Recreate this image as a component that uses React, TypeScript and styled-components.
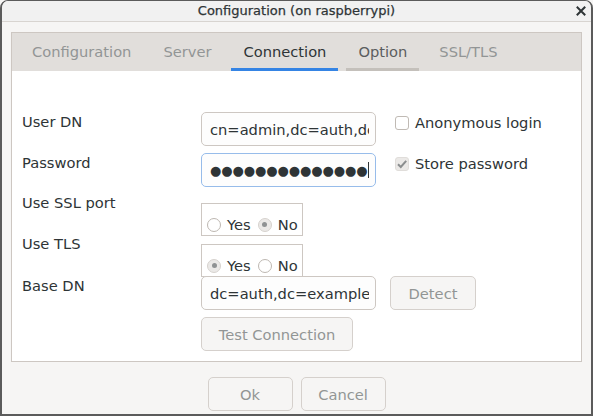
import React from 'react';
import styled, { createGlobalStyle } from 'styled-components';

const Global = createGlobalStyle`
  html, body { margin: 0; padding: 0; background: #f6f5f4; }
  body {
    font-family: "DejaVu Sans", "Liberation Sans", sans-serif;
    font-size: 14.67px;
    color: #2e3436;
  }
  * { box-sizing: border-box; }
`;

const Window = styled.div`
  width: 593px;
  height: 416px;
  display: flex;
  flex-direction: column;
  background: #f6f5f4;
  border: 2px solid #5b5b5b;
  border-top-width: 1px;
  border-radius: 8px 8px 0 0;
  overflow: hidden;
`;

const TitleBar = styled.div`
  height: 21px;
  flex: none;
  display: grid;
  grid-template-columns: 1fr auto 1fr;
  align-items: center;
  background: #f1f1f1;
  border-bottom: 1px solid #d8d4d0;
`;

const Title = styled.div`
  grid-column: 2;
  font-size: 13px;
  font-weight: normal;
  color: #2e3436;
  line-height: 20px;
  -webkit-text-stroke: 0.25px #2e3436;
`;

const CloseBox = styled.div`
  grid-column: 3;
  justify-self: end;
  display: flex;
  align-items: center;
  padding-right: 5px;
`;

const Body = styled.div`
  flex: 1;
  display: flex;
  flex-direction: column;
  padding: 10px 9px 3px;
`;

const Notebook = styled.div`
  height: 330px;
  flex: none;
  display: flex;
  flex-direction: column;
  border: 1px solid #cdc7c2;
  background: #ffffff;
`;

const TabBar = styled.div`
  height: 38px;
  flex: none;
  display: flex;
  gap: 8px;
  padding-left: 8px;
  background: #e1dedb;
`;

type TabState = 'active' | 'hover' | 'idle';

const tabColor = (s: TabState) => (s === 'active' ? '#2e3436' : s === 'hover' ? '#5b5d5e' : '#929595');
const tabLine = (s: TabState) => (s === 'active' ? '#3584e4' : s === 'hover' ? '#c4c0bb' : 'transparent');

const Tab = styled.div<{ $state: TabState }>`
  display: flex;
  align-items: center;
  padding: 1px 12px 0;
  color: ${(p) => tabColor(p.$state)};
  border-bottom: 3px solid ${(p) => tabLine(p.$state)};
`;

const Content = styled.div`
  flex: 1;
  display: flex;
  flex-direction: column;
  padding: 41px 0 0 10px;
`;

const Row = styled.div<{ $mt: number }>`
  display: grid;
  grid-template-columns: 179px 175px auto;
  align-items: start;
  margin-top: ${(p) => p.$mt}px;
`;

const Label = styled.div<{ $mt?: number }>`
  grid-column: 1;
  margin-top: ${(p) => p.$mt ?? 0}px;
  line-height: 17px;
`;

const Entry = styled.div<{ $focus?: boolean }>`
  grid-column: 2;
  height: 34px;
  display: flex;
  align-items: center;
  padding: 0 6px 0 8px;
  background: #fdfdfd;
  border: 1px solid ${(p) => (p.$focus ? '#97bcea' : '#cdc7c2')};
  border-radius: 5px;
`;

const EntryText = styled.div`
  flex: 1;
  min-width: 0;
  overflow: hidden;
  white-space: nowrap;
  display: flex;
  align-items: center;
`;

const Dots = styled.span`
  flex: none;
  font-size: 13px;
  letter-spacing: -0.1px;
`;

const Cursor = styled.span`
  flex: none;
  display: inline-block;
  width: 1px;
  height: 16px;
  background: #2e3436;
  margin-left: 1px;
`;

const CheckItem = styled.div`
  grid-column: 3;
  display: flex;
  align-items: center;
  gap: 6px;
  margin: 2px 0 0 19px;
  line-height: 17px;
`;

const CheckBoxMark = styled.span<{ $checked?: boolean }>`
  width: 14px;
  height: 14px;
  flex: none;
  display: flex;
  align-items: center;
  justify-content: center;
  border-radius: 3px;
  background: ${(p) => (p.$checked ? '#ebe9e7' : '#ffffff')};
  border: 1px solid ${(p) => (p.$checked ? '#e0ddda' : '#c0bab4')};
`;

const RadioGroup = styled.div<{ $mt: number; $h: number }>`
  grid-column: 2;
  justify-self: start;
  width: 102px;
  height: ${(p) => p.$h}px;
  margin-top: ${(p) => p.$mt}px;
  display: flex;
  align-items: flex-end;
  padding: 0 3px 2px 5px;
  border: 1px solid #cdc7c2;
`;

const RadioItem = styled.div<{ $gap?: number }>`
  display: flex;
  align-items: center;
  gap: 6px;
  margin-left: ${(p) => p.$gap ?? 0}px;
  line-height: 17px;
`;

const RadioMark = styled.span<{ $on?: boolean }>`
  width: 14px;
  height: 14px;
  flex: none;
  border-radius: 50%;
  display: flex;
  align-items: center;
  justify-content: center;
  background: ${(p) => (p.$on ? '#ebe9e7' : '#ffffff')};
  border: 1px solid ${(p) => (p.$on ? '#d6d2ce' : '#bdb7b1')};
  &::after {
    content: '';
    display: ${(p) => (p.$on ? 'block' : 'none')};
    width: 5px;
    height: 5px;
    border-radius: 50%;
    background: #8f9293;
  }
`;

const Button = styled.div<{ $w: number; $col?: number; $ml?: number }>`
  ${(p) => (p.$col ? `grid-column: ${p.$col};` : '')}
  width: ${(p) => p.$w}px;
  height: 34px;
  margin-left: ${(p) => p.$ml ?? 0}px;
  display: flex;
  align-items: center;
  justify-content: center;
  color: #929595;
  background: #f6f5f4;
  border: 1px solid #d5d0cc;
  border-radius: 5px;
`;

const ButtonBar = styled.div`
  margin-top: 15px;
  display: flex;
  justify-content: center;
  gap: 8px;
`;

const CloseIcon = () => (
  <svg width="10" height="10" viewBox="0 0 10 10">
    <path d="M1.5 1.5 L8.5 8.5 M8.5 1.5 L1.5 8.5" stroke="#2e3436" strokeWidth="2" strokeLinecap="square" />
  </svg>
);

const CheckIcon = () => (
  <svg width="12" height="12" viewBox="0 0 12 12">
    <path d="M2 6.2 L4.8 9 L10.2 2.8" fill="none" stroke="#8b8e8f" strokeWidth="2" />
  </svg>
);

const tabs: { name: string; state: TabState }[] = [
  { name: 'Configuration', state: 'idle' },
  { name: 'Server', state: 'idle' },
  { name: 'Connection', state: 'active' },
  { name: 'Option', state: 'hover' },
  { name: 'SSL/TLS', state: 'idle' },
];

export default function App() {
  return (
    <>
      <Global />
      <Window>
        <TitleBar>
          <Title>Configuration (on raspberrypi)</Title>
          <CloseBox>
            <CloseIcon />
          </CloseBox>
        </TitleBar>
        <Body>
          <Notebook>
            <TabBar>
              {tabs.map((t) => (
                <Tab key={t.name} $state={t.state}>
                  {t.name}
                </Tab>
              ))}
            </TabBar>
            <Content>
              <Row $mt={0}>
                <Label $mt={1}>User DN</Label>
                <Entry>
                  <EntryText>cn=admin,dc=auth,dc=example,dc=com</EntryText>
                </Entry>
                <CheckItem>
                  <CheckBoxMark />
                  Anonymous login
                </CheckItem>
              </Row>
              <Row $mt={7}>
                <Label $mt={1}>Password</Label>
                <Entry $focus>
                  <EntryText>
                    <Dots>●●●●●●●●●●●●●●</Dots>
                    <Cursor />
                  </EntryText>
                </Entry>
                <CheckItem>
                  <CheckBoxMark $checked>
                    <CheckIcon />
                  </CheckBoxMark>
                  Store password
                </CheckItem>
              </Row>
              <Row $mt={7}>
                <Label>Use SSL port</Label>
                <RadioGroup $mt={9} $h={33}>
                  <RadioItem>
                    <RadioMark />
                    Yes
                  </RadioItem>
                  <RadioItem $gap={7}>
                    <RadioMark $on />
                    No
                  </RadioItem>
                </RadioGroup>
              </Row>
              <Row $mt={0}>
                <Label $mt={-1}>Use TLS</Label>
                <RadioGroup $mt={8} $h={33}>
                  <RadioItem>
                    <RadioMark $on />
                    Yes
                  </RadioItem>
                  <RadioItem $gap={7}>
                    <RadioMark />
                    No
                  </RadioItem>
                </RadioGroup>
              </Row>
              <Row $mt={-1}>
                <Label $mt={1}>Base DN</Label>
                <Entry>
                  <EntryText>dc=auth,dc=example,dc=com</EntryText>
                </Entry>
                <Button $col={3} $w={86} $ml={14}>
                  Detect
                </Button>
              </Row>
              <Row $mt={7}>
                <Button $col={2} $w={152}>
                  Test Connection
                </Button>
              </Row>
            </Content>
          </Notebook>
          <ButtonBar>
            <Button $w={85}>Ok</Button>
            <Button $w={85}>Cancel</Button>
          </ButtonBar>
        </Body>
      </Window>
    </>
  );
}
